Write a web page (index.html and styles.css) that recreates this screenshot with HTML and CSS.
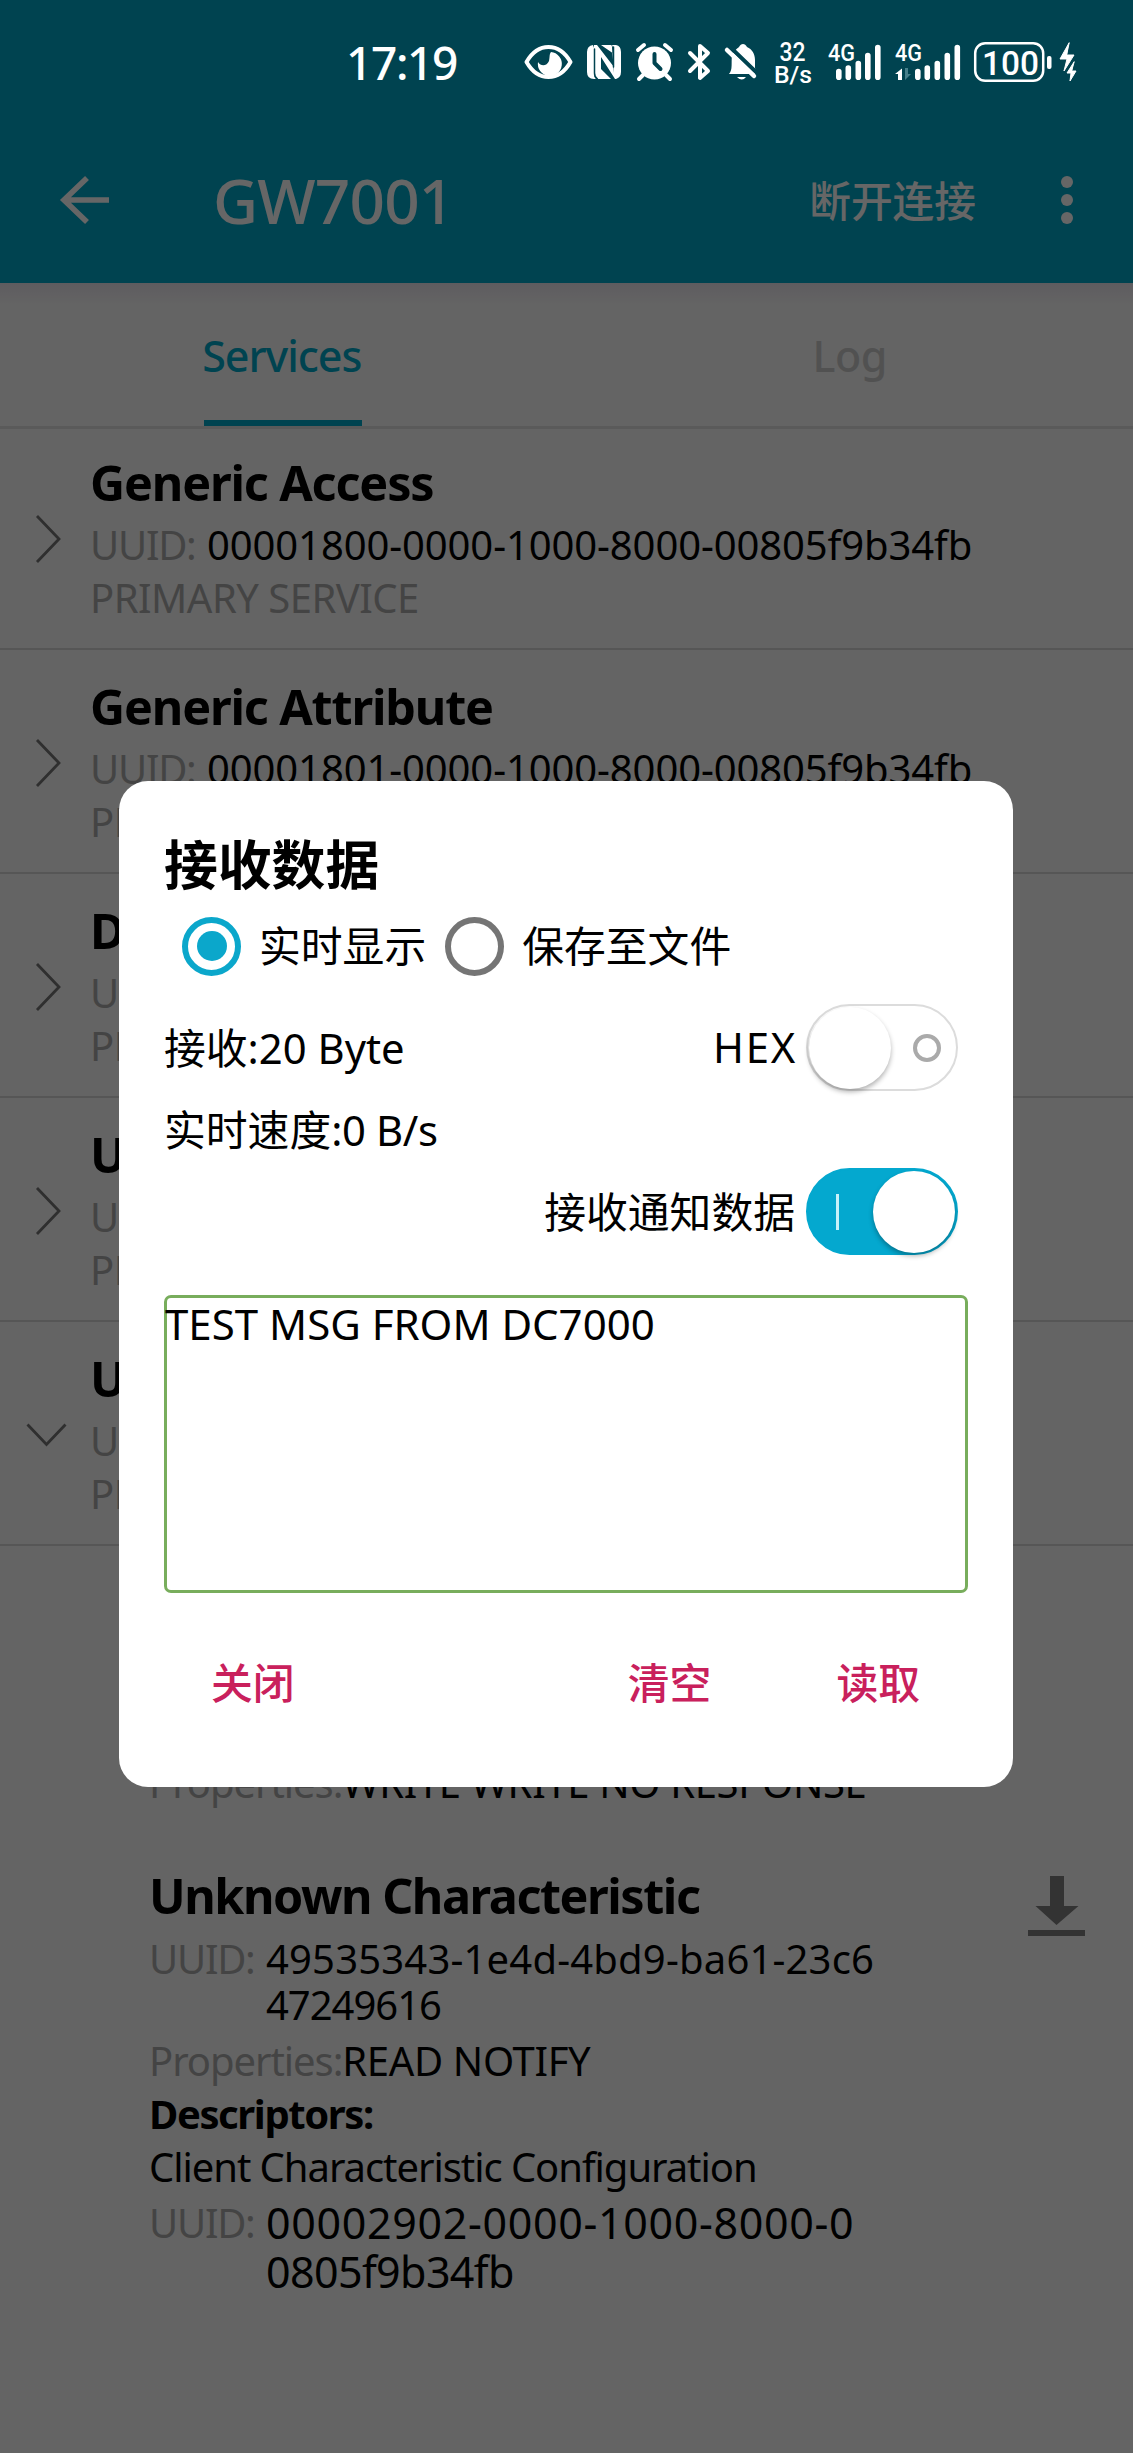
FILE: index.html
```
<!DOCTYPE html>
<html lang="zh-CN">
<head>
<meta charset="utf-8">
<title>GW7001</title>
<link rel="stylesheet" href="styles.css">
</head>
<body>
<div class="screen">
  <header class="appbar">
    <svg class="back" width="52" height="52" viewBox="0 0 52 52"><path d="M29 4 6 26l23 22M7 26h44" fill="none" stroke="#fff" stroke-width="5.6"/></svg>
    <h1 class="appbar-title">GW7001</h1>
    <span class="appbar-action">断开连接</span>
    <svg class="more" width="12" height="50" viewBox="0 0 12 50" fill="#fff"><circle cx="6" cy="7" r="6"/><circle cx="6" cy="25" r="6"/><circle cx="6" cy="43" r="6"/></svg>
  </header>

  <nav class="tabs">
    <div class="tab"><span class="tab-label active">Services</span></div>
    <div class="tab"><span class="tab-label log">Log</span></div>
  </nav>

  <main class="services">
    <section class="service">
      <svg class="chevron" width="28" height="48" viewBox="0 0 28 48"><path d="M2 1l22 23L2 47"/></svg>
      <div class="service-body">
        <h2 class="name">Generic Access</h2>
        <p class="uuid"><span class="key">UUID:</span><span class="value">00001800-0000-1000-8000-00805f9b34fb</span></p>
        <p class="kind">PRIMARY SERVICE</p>
      </div>
    </section>
    <section class="service">
      <svg class="chevron" width="28" height="48" viewBox="0 0 28 48"><path d="M2 1l22 23L2 47"/></svg>
      <div class="service-body">
        <h2 class="name">Generic Attribute</h2>
        <p class="uuid"><span class="key">UUID:</span><span class="value">00001801-0000-1000-8000-00805f9b34fb</span></p>
        <p class="kind">PRIMARY SERVICE</p>
      </div>
    </section>
    <section class="service">
      <svg class="chevron" width="28" height="48" viewBox="0 0 28 48"><path d="M2 1l22 23L2 47"/></svg>
      <div class="service-body">
        <h2 class="name">Device Information</h2>
        <p class="uuid"><span class="key">UUID:</span></p>
        <p class="kind">PRIMARY SERVICE</p>
      </div>
    </section>
    <section class="service">
      <svg class="chevron" width="28" height="48" viewBox="0 0 28 48"><path d="M2 1l22 23L2 47"/></svg>
      <div class="service-body">
        <h2 class="name">Unknown Service</h2>
        <p class="uuid"><span class="key">UUID:</span></p>
        <p class="kind">PRIMARY SERVICE</p>
      </div>
    </section>
    <section class="service">
      <svg class="chevron down" width="42" height="24" viewBox="0 0 42 24"><path d="M1.500 1.500 20.500 21.500 39.500 1.500"/></svg>
      <div class="service-body">
        <h2 class="name">Unknown Service</h2>
        <p class="uuid"><span class="key">UUID:</span></p>
        <p class="kind">PRIMARY SERVICE</p>
      </div>
    </section>

    <section class="characteristic first">
      <p class="props"><span class="key">Properties:</span><span class="value caps">WRITE WRITE NO RESPONSE</span></p>
    </section>
    <section class="characteristic">
      <div class="char-head">
        <h2 class="name wide">Unknown Characteristic</h2>
        <svg class="download" width="57" height="60" viewBox="0 0 57 60" fill="#808080"><path d="M22 0h14v30h14.500L28.500 49 7.500 30H22zM0 54h57v6H0z"/></svg>
      </div>
      <p class="uuid long"><span class="key">UUID:</span><span class="value">49535343-1e4d-4bd9-ba61-23c6<br><span class="tight">47249616</span></span></p>
      <p class="props"><span class="key">Properties:</span><span class="value caps">READ NOTIFY</span></p>
      <h3 class="descriptors">Descriptors:</h3>
      <p class="descriptor">Client Characteristic Configuration</p>
      <p class="uuid large"><span class="key">UUID:</span><span class="value">00002902-0000-1000-8000-0<br><span class="tight">0805f9b34fb</span></span></p>
    </section>
  </main>
</div>

<div class="scrim"></div>

<div class="statusbar">
  <span class="clock">17:19</span>
  <svg class="status-icons" width="560" height="50" viewBox="520 38 560 50" fill="#fff" stroke-linecap="round" stroke-linejoin="round">
    <path d="M526.500 62C538 42 559 42 570.500 62 559 82 538 82 526.500 62z" fill="none" stroke="#fff" stroke-width="4"/>
    <path d="M551 52a12 12 0 1 1-13 10c3 5 9 4 11-1 1-4 0-6 2-9z"/>
    <path d="M594 45h3l17 22V54l-13-9h10q1 0 1 2l2 26q0 4 3 6h-2L601 57v12l10 10H597q-3 0-3-6zM593 45q-6 1-6 7v20q0 7 7 7h4q-4-2-4-7V48zM612 45h4q5 1 5 7v20q0 6-6 7-1-1-1-6V50z"/>
    <path d="M594.500 49v24q0 4 3 6" fill="none" stroke="#004350" stroke-width="1.500"/>
    <path d="M613.500 47v20" fill="none" stroke="#004350" stroke-width="1.500"/>
    <circle cx="654.500" cy="63" r="16.500"/>
    <path d="M638 50l6-5M671 50l-6-5M643 75l-4 4M666 75l4 4" stroke="#fff" stroke-width="4"/>
    <path d="M654.500 54v9l6 6" stroke="#004350" stroke-width="4" fill="none"/>
    <path d="M690 53l18 18-8 7V46l8 7-18 18" fill="none" stroke="#fff" stroke-width="4"/>
    <path d="M729 74c4-4 2-12 3-18 2-6 6-8 7-9 2-4 6-4 8 0 5 2 8 7 8 13v8l2 6zM737 77h9q-4 5-9 0z"/>
    <path d="M729 46l29 28" stroke="#004350" stroke-width="4"/>
    <path d="M727 50l27 26" stroke="#fff" stroke-width="4.500"/>
    <g class="status-text">
      <text x="779.500" y="61" font-size="25" textLength="26" lengthAdjust="spacingAndGlyphs">32</text>
      <text x="774" y="83" font-size="24" textLength="38" lengthAdjust="spacingAndGlyphs">B/s</text>
      <text x="828" y="61" font-size="23" textLength="27" lengthAdjust="spacingAndGlyphs">4G</text>
      <text x="895" y="61" font-size="23" textLength="27" lengthAdjust="spacingAndGlyphs">4G</text>
      <text x="982" y="75" font-size="34" textLength="57" lengthAdjust="spacingAndGlyphs">100</text>
    </g>
    <path d="M838.800 71.500v5.700M848.300 68v9.200M858.300 63.500v13.700M867.800 55.500v21.700M877.800 47.500v29.700M917.800 71.500v5.700M927.300 68v9.200M937.300 63.500v13.700M947.300 55.500v21.700M957.300 47.500v29.700" stroke="#fff" stroke-width="5.600"/>
    <path d="M902 68.500v11.500h-4V74h-3z"/>
    <path d="M905 68v12l6-6h-3v-6z" fill="#46808b"/>
    <rect x="975.200" y="43.200" width="68" height="37.600" rx="10" fill="none" stroke="#fff" stroke-width="2.500"/>
    <rect x="1047" y="56" width="4.500" height="13" rx="2"/>
    <path d="M1069 43l-9 16h7l-3 12 10-16h-7zM1074 62l-7 11h4l-1 8 6-10h-4z" stroke="#fff" stroke-width="1"/>
  </svg>
</div>

<div class="dialog">
  <h2 class="dialog-title">接收数据</h2>
  <div class="radios">
    <span class="radio on"></span><span class="radio-label first-label">实时显示</span>
    <span class="radio"></span><span class="radio-label">保存至文件</span>
  </div>
  <div class="row counter">
    <span class="label">接收<span class="latin">:20 Byte</span></span>
    <span class="switch-group"><span class="label hex">HEX</span><span class="switch"><span class="knob"></span><span class="ring"></span></span></span>
  </div>
  <div class="row speed"><span>实时速度<span class="latin-tight">:0 B/s</span></span></div>
  <div class="row notify">
    <span class="switch-group"><span class="label notify-label">接收通知数据</span><span class="switch checked"><span class="bar"></span><span class="knob"></span></span></span>
  </div>
  <div class="output">TEST MSG FROM DC7000</div>
  <div class="actions"><span>关闭</span><span class="clear">清空</span><span class="read">读取</span></div>
</div>
</body>
</html>
```
FILE: styles.css
```
* { box-sizing: border-box; margin: 0; padding: 0; }

body {
  position: relative;
  width: 1133px;
  height: 2453px;
  overflow: hidden;
  background: #fafafa;
  color: #000;
  font-family: "Noto Sans", "Noto Sans CJK SC", sans-serif;
  white-space: nowrap;
}

.screen { height: 2453px; }

.appbar {
  display: flex;
  align-items: center;
  height: 283px;
  padding: 117px 60px 0 58px;
  background: #00a8c8;
  color: #fff;
}
.appbar-title {
  margin-left: 103px;
  font-size: 62px;
  font-weight: 500;
  line-height: 80px;
  letter-spacing: -0.800px;
}
.appbar-action {
  margin-left: auto;
  padding-bottom: 3px;
  font-size: 41.700px;
  font-weight: 500;
}
.more { margin-left: 85px; }

.tabs {
  display: flex;
  height: 146px;
  border-bottom: 3px solid #e0e0e0;
  background: linear-gradient(#ebe6ee, #fafafa 22px);
}
.tab { display: flex; flex: 1; justify-content: center; }
.tab-label {
  padding-top: 43px;
  height: 143px;
  font-size: 43px;
  font-weight: 500;
  line-height: 60px;
  color: #cbcbcb;
}
.tab-label.log { letter-spacing: -0.500px; }
.tab-label.active {
  width: 158px;
  letter-spacing: -1.050px;
  text-indent: -2px;
  color: #00a8c8;
  border-bottom: 6px solid #00a8c8;
}

.services { margin-top: -3px; }
.service {
  display: flex;
  height: 224px;
  padding: 28px 0 0 35px;
  border-bottom: 2px solid #d8d8d8;
}
.chevron {
  flex: none;
  margin-top: 61px;
  fill: none;
  stroke: #757575;
  stroke-width: 2.800;
}
.chevron.down { margin: 73px 0 0 -9px; }
.service-body { margin-left: 27px; }
.chevron.down + .service-body { margin-left: 22px; }

.name {
  font-size: 48.500px;
  line-height: 57px;
  letter-spacing: -1.150px;
}
.name.wide { letter-spacing: -1.450px; }
.uuid, .props { display: flex; font-size: 40px; line-height: 40px; }
.uuid { margin-top: 14px; }
.key { color: #aaa; letter-spacing: -1.060px; }
.uuid .key { width: 117px; letter-spacing: -1.300px; }
.uuid .value { letter-spacing: -0.100px; }
.kind { margin-top: 13px; font-size: 40px; line-height: 40px; letter-spacing: -0.520px; color: #aaa; }
.caps { letter-spacing: -0.350px; }

.characteristic { padding: 64px 48px 0 149px; }
.characteristic.first { padding-top: 217px; }
.char-head { display: flex; justify-content: space-between; height: 69px; }
.download { margin-top: 9px; }
.characteristic .uuid.long { margin-top: 0; line-height: 46px; }
.uuid.long .value { letter-spacing: 0.180px; }
.uuid.long .tight { letter-spacing: -1.020px; }
.characteristic:not(.first) .props { margin-top: 13px; }
.descriptors { margin-top: 13px; font-size: 40px; line-height: 40px; letter-spacing: -1.390px; }
.descriptor { margin-top: 13px; font-size: 40px; line-height: 40px; letter-spacing: -1.060px; }
.uuid.large { margin-top: 11px; font-size: 43px; line-height: 49px; }
.uuid.large .key { font-size: 40px; }
.uuid.large .value { letter-spacing: 0.650px; }
.uuid.large .tight { letter-spacing: -0.620px; }

.scrim { position: absolute; inset: 0; background: rgba(0, 0, 0, 0.6); }

.statusbar {
  position: absolute;
  top: 0;
  left: 0;
  display: flex;
  width: 1133px;
  height: 124px;
  padding: 0 53px 0 346px;
  align-items: center;
  justify-content: space-between;
  color: #fff;
}
.clock { font-size: 46px; font-weight: 500; line-height: 60px; letter-spacing: -1.360px; }
.status-icons { margin-top: 2px; }
.status-text { font-family: Roboto, sans-serif; font-weight: 500; }

.dialog {
  position: absolute;
  top: 781px;
  left: 119px;
  width: 894px;
  height: 1006px;
  padding: 53px 45px 0 45px;
  border-radius: 29px;
  background: #fff;
  font-size: 41.800px;
}
.dialog-title { font-size: 53.800px; line-height: 60px; }
.radios { display: flex; align-items: center; height: 60px; margin-top: 22px; padding-left: 18px; }
.radio {
  display: flex;
  align-items: center;
  justify-content: center;
  width: 59px;
  height: 59px;
  border: 6px solid #757575;
  border-radius: 50%;
}
.radio.on { border-color: #0ba7cb; }
.radio.on::before { content: ""; width: 30px; height: 30px; border-radius: 50%; background: #0ba7cb; }
.radio-label { margin-left: 18px; line-height: 60px; }
.first-label { margin-right: 19px; }

.row { display: flex; align-items: center; justify-content: space-between; }
.row.counter { height: 87px; margin-top: 28px; }
.row.speed { height: 50px; margin-top: 14px; line-height: 50px; }
.row.notify { height: 87px; margin-top: 13px; justify-content: flex-end; }
.label { padding-bottom: 3px; }
.switch-group { display: flex; align-items: center; padding-right: 10px; }
.latin-tight { letter-spacing: -0.400px; }
.hex { letter-spacing: 1.800px; margin-right: 9px; }
.notify-label { margin-right: 11px; }
.switch {
  display: flex;
  align-items: center;
  justify-content: space-between;
  width: 152px;
  height: 87px;
  padding: 0 15px 0 1px;
  border: 2px solid #dcdcdc;
  border-radius: 44px;
}
.knob {
  width: 82px;
  height: 82px;
  border-radius: 50%;
  background: #fff;
  box-shadow: 0 3px 5px rgba(0, 0, 0, 0.3);
}
.ring { width: 28px; height: 28px; border: 4px solid #aaa; border-radius: 50%; }
.switch.checked { padding: 0 1px 0 28px; border-color: #04a8cf; background: #04a8cf; }
.bar { width: 3px; height: 36px; background: #c8f1fa; }

.output {
  height: 298px;
  margin-top: 40px;
  border: 3px solid #78ad5c;
  border-radius: 7px;
  font-size: 42px;
  line-height: 51px;
  text-indent: -2px;
}
.actions {
  display: flex;
  height: 60px;
  margin-top: 60px;
  padding: 0 48px 0 47px;
  font-weight: 500;
  line-height: 60px;
  color: #c9205c;
}
.clear { margin-left: auto; }
.read { margin-left: 125px; }
```
